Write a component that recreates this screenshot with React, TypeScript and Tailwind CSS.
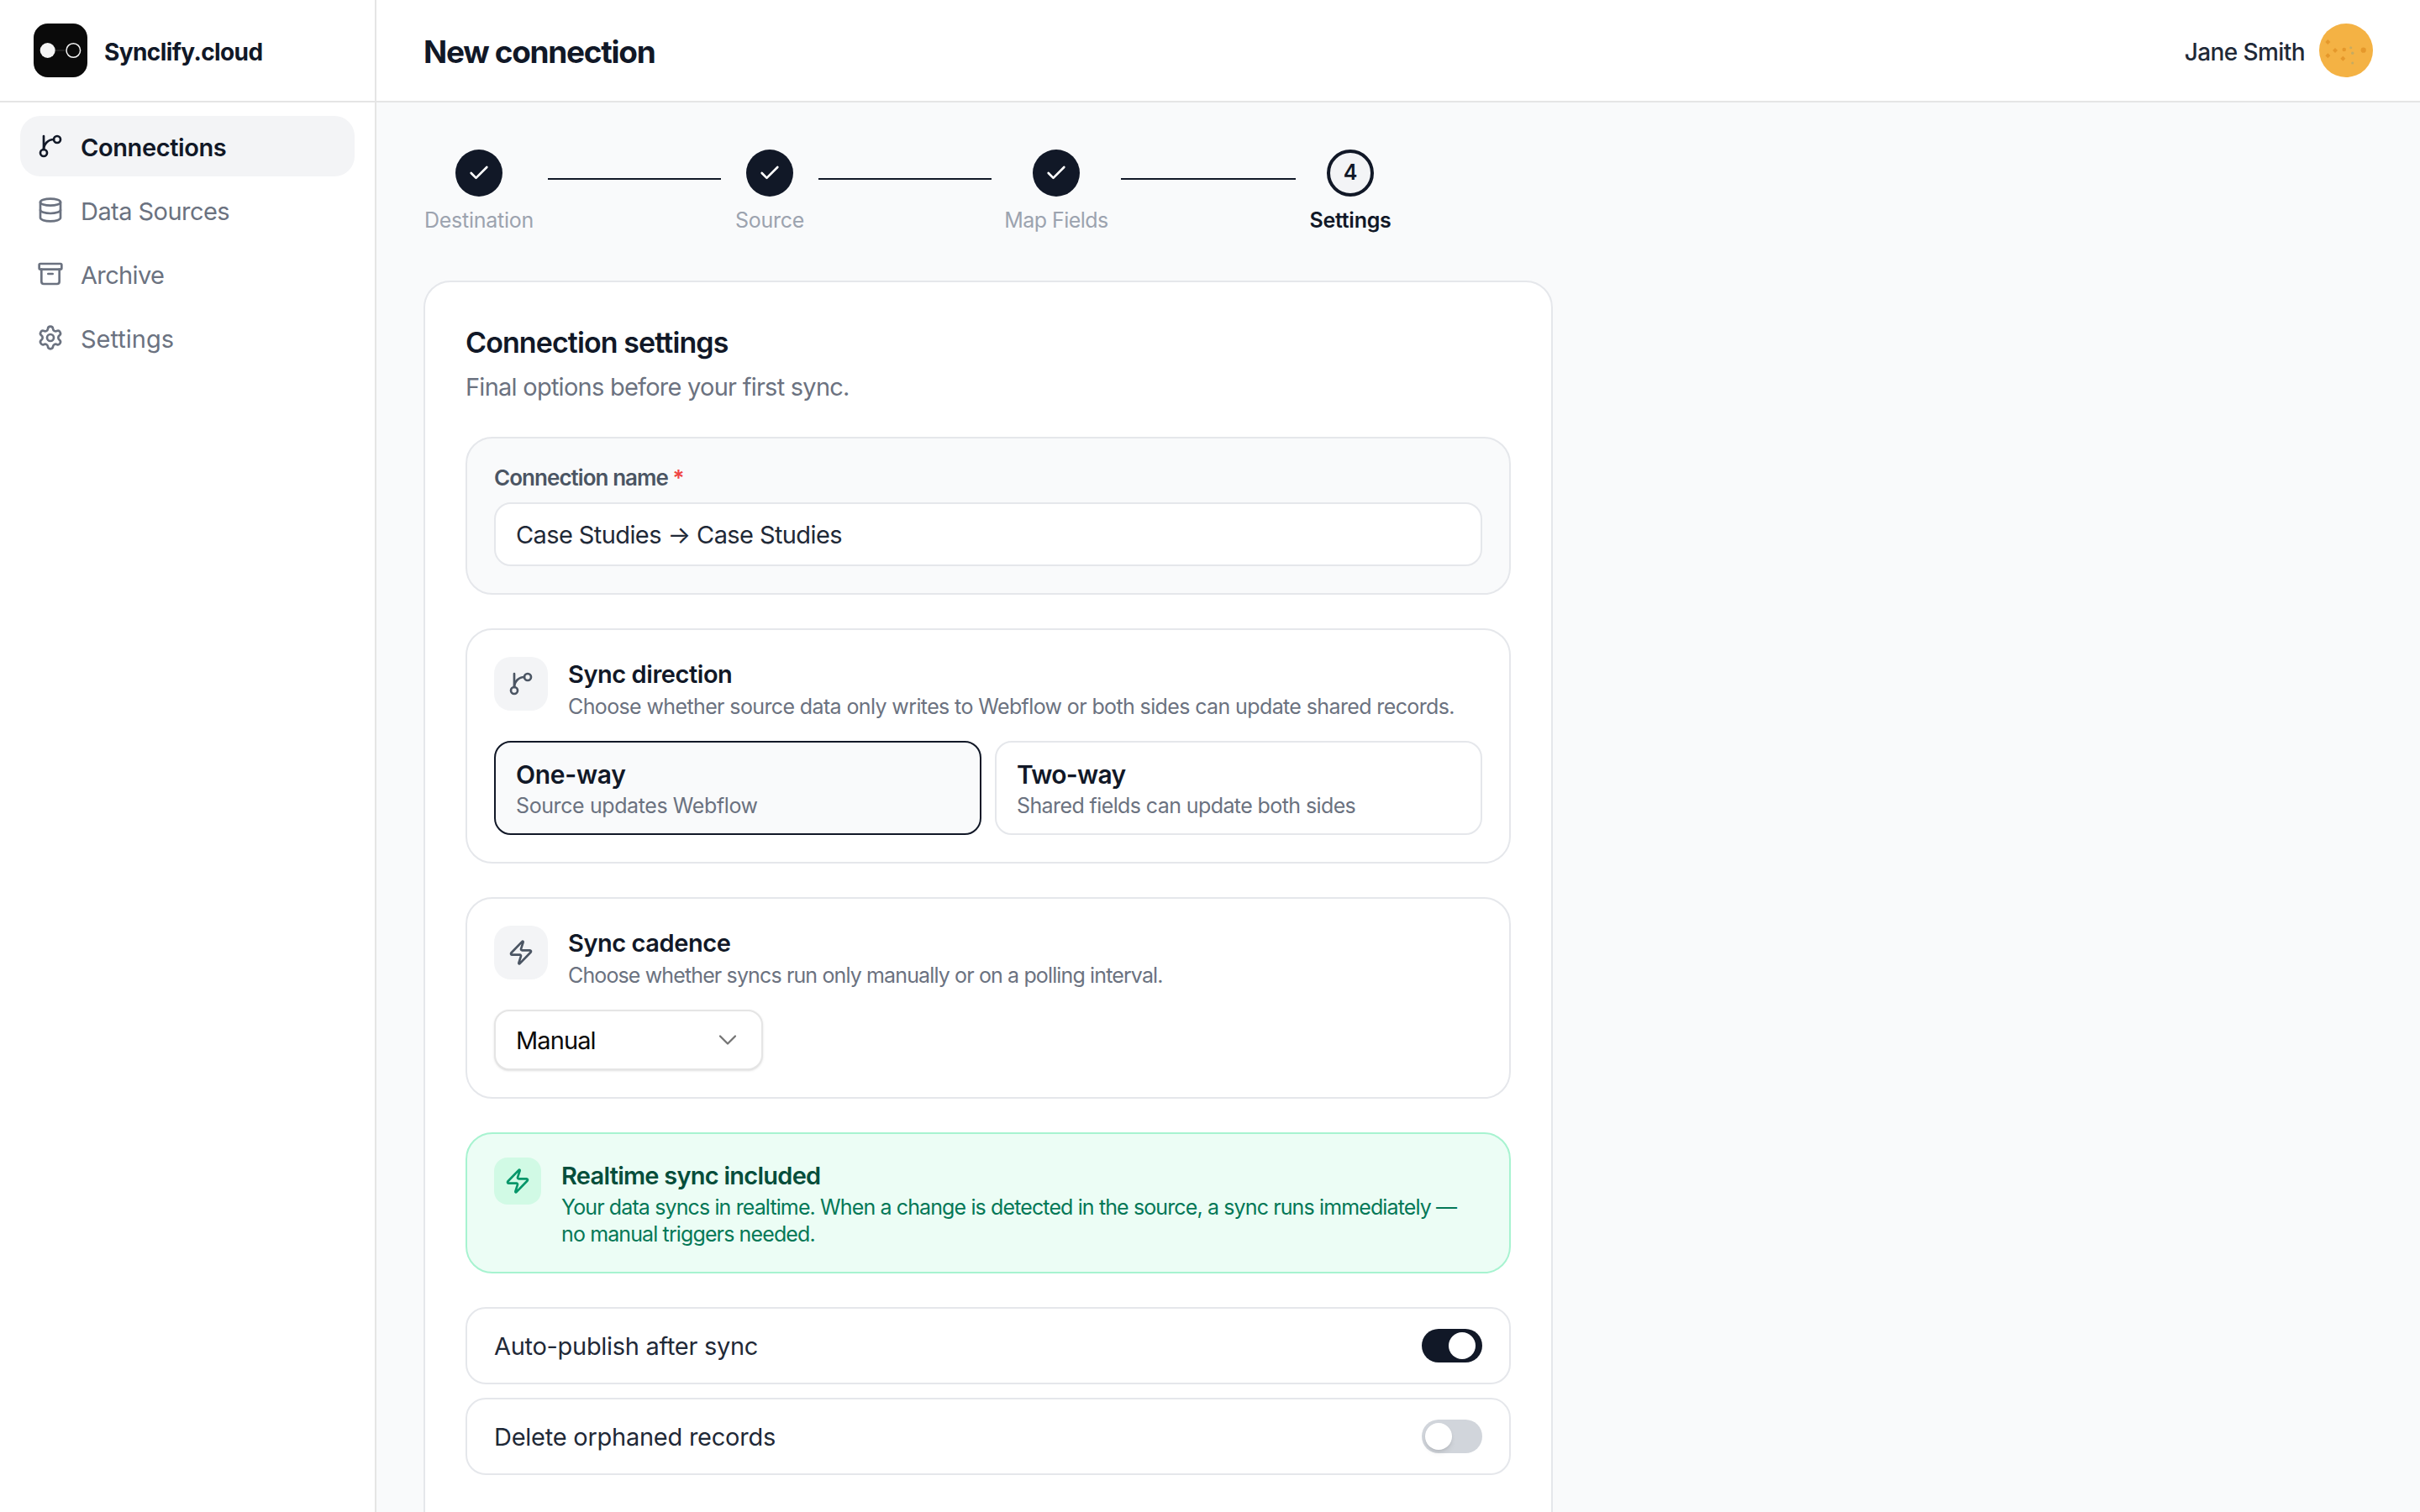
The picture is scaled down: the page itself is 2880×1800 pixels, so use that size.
import { Archive, Check, ChevronDown, Database, Settings, Zap } from "lucide-react";
import type { ReactNode } from "react";

function Branch({ className }: { className: string }) {
  return (
    <svg viewBox="0 0 24 24" fill="none" stroke="currentColor" strokeWidth="2" strokeLinecap="round" strokeLinejoin="round" className={className}>
      <path d="M6 3v12" />
      <circle cx="18" cy="6" r="3" />
      <circle cx="6" cy="18" r="3" />
      <path d="M15 6a9 9 0 0 0-9 9" />
    </svg>
  );
}

function Nav({ icon, label, active, tracking }: { icon: ReactNode; label: string; active?: boolean; tracking: string }) {
  return (
    <div className={active ? "flex h-[72px] items-center gap-[20px] rounded-[24px] bg-[#f3f4f6] px-[20px] text-[29px] font-semibold text-[#111827]" : "flex h-[72px] items-center gap-[20px] rounded-[24px] px-[20px] text-[29px] font-normal text-[#6b7280]"}>
      {icon}
      <span className={`pt-[3px] ${tracking}`}>{label}</span>
    </div>
  );
}

function Step({ label, n, current, width, tracking }: { label: string; n?: number; current?: boolean; width: string; tracking: string }) {
  return (
    <div className={`flex shrink-0 flex-col items-center gap-[10px] ${width}`}>
      {current ? (
        <div className="flex h-[56px] w-[56px] items-center justify-center rounded-full border-[4px] border-[#111827] bg-[#f3f4f6] text-[25px] font-semibold text-[#111827]">{n}</div>
      ) : (
        <div className="flex h-[56px] w-[56px] items-center justify-center rounded-full bg-[#111827] text-white">
          <Check className="h-[28px] w-[28px]" strokeWidth={2.25} />
        </div>
      )}
      <span className={current ? `text-[25px] leading-[36px] font-semibold whitespace-nowrap text-[#111827] ${tracking}` : `text-[25px] leading-[36px] font-normal whitespace-nowrap text-[#9ca3af] ${tracking}`}>{label}</span>
    </div>
  );
}

function Line({ width }: { width: string }) {
  return <div className={`mx-[16px] mb-[32px] h-[2px] bg-[#111827] ${width}`} />;
}

function Toggle({ on }: { on?: boolean }) {
  return (
    <div className={on ? "flex h-[40px] w-[72px] items-center rounded-full bg-[#111827] p-[4px]" : "flex h-[40px] w-[72px] items-center rounded-full bg-[#d1d5db] p-[4px]"}>
      <div className={on ? "h-[32px] w-[32px] translate-x-[28px] rounded-full bg-white" : "h-[32px] w-[32px] rounded-full bg-white shadow-md"} />
    </div>
  );
}

function IconBox({ children }: { children: ReactNode }) {
  return <div className="flex h-[64px] w-[64px] shrink-0 items-center justify-center rounded-[20px] bg-[#f3f4f6] text-[#4b5563]">{children}</div>;
}

export default function App() {
  return (
    <div className="flex h-[1800px] w-[2880px] overflow-hidden bg-white font-['Inter',sans-serif] text-[#111827]">
      <aside className="flex w-[448px] shrink-0 flex-col border-r-[2px] border-[#e5e5e5] bg-white">
        <div className="flex h-[122px] shrink-0 items-center gap-[20px] border-b-[2px] border-[#e5e5e5] pl-[40px]">
          <svg viewBox="0 0 64 64" className="h-[64px] w-[64px]">
            <rect width="64" height="64" rx="17" fill="#0a0a0a" />
            <path d="M26 32h11" stroke="#2a2a2a" strokeWidth="1.500" />
            <circle cx="16.700" cy="32" r="9" fill="#f5f5f5" />
            <circle cx="47.300" cy="32" r="8.300" fill="none" stroke="#f5f5f5" strokeWidth="1.500" />
          </svg>
          <span className="pt-[3px] text-[28px] font-bold tracking-[-0.6px] text-[#111827]">Synclify.cloud</span>
        </div>
        <nav className="flex flex-col gap-[4px] px-[24px] pt-[16px]">
          <Nav active tracking="tracking-[-0.4px]" icon={<Branch className="h-[32px] w-[32px] shrink-0" />} label="Connections" />
          <Nav tracking="tracking-[-0.55px]" icon={<Database className="h-[32px] w-[32px] shrink-0" />} label="Data Sources" />
          <Nav tracking="tracking-[-0.65px]" icon={<Archive className="h-[32px] w-[32px] shrink-0" />} label="Archive" />
          <Nav tracking="tracking-[0px]" icon={<Settings className="h-[32px] w-[32px] shrink-0" />} label="Settings" />
        </nav>
      </aside>
      <div className="flex min-w-0 flex-1 flex-col bg-[#f9fafb]">
        <header className="flex h-[122px] shrink-0 items-center justify-between border-b-[2px] border-[#e5e5e5] bg-white px-[56px]">
          <h1 className="pt-[3px] text-[37px] font-bold tracking-[-1.3px] text-[#111827]">New connection</h1>
          <div className="flex items-center gap-[17px]">
            <span className="pt-[3px] text-[28px] font-medium tracking-[-0.6px] text-[#1f2937]">Jane Smith</span>
            <svg viewBox="0 0 64 64" className="h-[64px] w-[64px]">
              <circle cx="32" cy="32" r="32" fill="#f4b244" />
              <g fill="#e5982b">
                <path d="M10.300 19l3 3-3 3-3-3z" />
                <path d="M19 29l3 3-3 3-3-3z" />
                <path d="M10.300 35.300l3 3-3 3-3-3z" />
                <path d="M28.300 38.700l3 3-3 3-3-3z" />
                <circle cx="29.700" cy="31" r="2.300" />
                <circle cx="52.700" cy="31.700" r="3.100" />
              </g>
              <g fill="#c7ab60">
                <circle cx="37.700" cy="28.700" r="1.500" />
                <circle cx="39.700" cy="35.300" r="1.700" />
                <circle cx="39.700" cy="47" r="1.500" />
              </g>
            </svg>
          </div>
        </header>
        <main className="flex flex-col px-[56px] pt-[56px]">
          <div className="flex items-center">
            <Step label="Destination" width="w-[132px]" tracking="tracking-[-0.25px]" />
            <Line width="w-[206px]" />
            <Step label="Source" width="w-[84px]" tracking="tracking-[-0.25px]" />
            <Line width="w-[206px]" />
            <Step label="Map Fields" width="w-[122px]" tracking="tracking-[-0.55px]" />
            <Line width="w-[208px]" />
            <Step label="Settings" n={4} current width="w-[98px]" tracking="tracking-[-0.25px]" />
          </div>
          <section className="mt-[54px] flex w-[1344px] flex-col gap-[40px] rounded-[32px] border-[2px] border-[#e5e7eb] bg-white px-[48px] pt-[48px] pb-[160px]">
            <div>
              <h2 className="text-[34px] leading-[48px] font-semibold tracking-[-0.9px] text-[#111827]">Connection settings</h2>
              <p className="mt-[10px] text-[29px] leading-[38px] tracking-[-0.75px] text-[#6b7280]">Final options before your first sync.</p>
            </div>
            <div className="flex flex-col gap-[14px] rounded-[32px] border-[2px] border-[#e5e7eb] bg-[#f9fafb] p-[32px]">
              <label className="text-[26px] leading-[30px] font-semibold tracking-[-0.95px] text-[#4b5563]">
                Connection name <span className="text-[#ef4444]">*</span>
              </label>
              <div className="flex h-[76px] items-center rounded-[20px] border-[2px] border-[#e5e7eb] bg-white px-[24px] pt-[2px] text-[29px] tracking-[-0.6px] text-[#1f2937]">Case Studies → Case Studies</div>
            </div>
            <div className="flex flex-col gap-[36px] rounded-[32px] border-[2px] border-[#e5e7eb] bg-white p-[32px]">
              <div className="flex h-[64px] gap-[24px]">
                <IconBox><Branch className="h-[32px] w-[32px]" /></IconBox>
                <div className="pt-[2px]">
                  <div className="text-[29px] leading-[38px] font-semibold tracking-[-0.45px] text-[#111827]">Sync direction</div>
                  <div className="text-[25px] leading-[38px] tracking-[-0.62px] whitespace-nowrap text-[#6b7280]">Choose whether source data only writes to Webflow or both sides can update shared records.</div>
                </div>
              </div>
              <div className="grid grid-cols-2 gap-[16px]">
                <div className="flex h-[112px] flex-col justify-center rounded-[20px] border-[2px] border-[#111827] bg-[#f9fafb] px-[24px] pt-[4px]">
                  <div className="text-[30px] leading-[38px] font-semibold tracking-[-0.3px] text-[#111827]">One-way</div>
                  <div className="text-[25px] leading-[36px] tracking-[-0.4px] text-[#6b7280]">Source updates Webflow</div>
                </div>
                <div className="flex h-[112px] flex-col justify-center rounded-[20px] border-[2px] border-[#e5e7eb] bg-white px-[24px] pt-[4px]">
                  <div className="text-[30px] leading-[38px] font-semibold tracking-[-0.7px] text-[#111827]">Two-way</div>
                  <div className="text-[25px] leading-[36px] tracking-[-0.6px] text-[#6b7280]">Shared fields can update both sides</div>
                </div>
              </div>
            </div>
            <div className="flex flex-col gap-[36px] rounded-[32px] border-[2px] border-[#e5e7eb] bg-white p-[32px]">
              <div className="flex h-[64px] gap-[24px]">
                <IconBox><Zap className="h-[32px] w-[32px]" /></IconBox>
                <div className="pt-[2px]">
                  <div className="text-[29px] leading-[38px] font-semibold tracking-[-0.45px] text-[#111827]">Sync cadence</div>
                  <div className="text-[25px] leading-[38px] tracking-[-0.87px] whitespace-nowrap text-[#6b7280]">Choose whether syncs run only manually or on a polling interval.</div>
                </div>
              </div>
              <div className="flex h-[72px] w-[320px] items-center justify-between rounded-[18px] border-[2px] border-[#e5e5e5] bg-white pr-[22px] pl-[24px] text-[29px] tracking-[-0.9px] text-[#0a0a0a] shadow-sm">
                <span className="pt-[2px]">Manual</span>
                <ChevronDown className="h-[36px] w-[36px] text-[#737373]" strokeWidth={1.5} />
              </div>
            </div>
            <div className="flex gap-[24px] rounded-[32px] border-[2px] border-[#a7f3d0] bg-[#ecfdf5] pt-[28px] pr-[32px] pb-[29px] pl-[32px]">
              <div className="flex h-[56px] w-[56px] shrink-0 items-center justify-center rounded-[16px] bg-[#d1fae5] text-[#059669]">
                <Zap className="h-[32px] w-[32px]" />
              </div>
              <div className="pt-[3px]">
                <div className="text-[29px] leading-[38px] font-semibold tracking-[-0.75px] text-[#064e3b]">Realtime sync included</div>
                <div className="mt-[2px] text-[25px] leading-[32px] tracking-[-0.88px] whitespace-nowrap text-[#047857]">
                  Your data syncs in realtime. When a change is detected in the source, a sync runs immediately —
                  <br />
                  no manual triggers needed.
                </div>
              </div>
            </div>
            <div className="flex flex-col gap-[16px]">
              <div className="flex h-[92px] items-center justify-between rounded-[24px] border-[2px] border-[#e5e7eb] bg-white px-[32px] text-[29px] tracking-[-0.3px] text-[#1f2937]">
                <span className="pt-[2px]">Auto-publish after sync</span>
                <Toggle on />
              </div>
              <div className="flex h-[92px] items-center justify-between rounded-[24px] border-[2px] border-[#e5e7eb] bg-white px-[32px] text-[29px] tracking-[-0.25px] text-[#1f2937]">
                <span className="pt-[2px]">Delete orphaned records</span>
                <Toggle />
              </div>
            </div>
          </section>
        </main>
      </div>
    </div>
  );
}
